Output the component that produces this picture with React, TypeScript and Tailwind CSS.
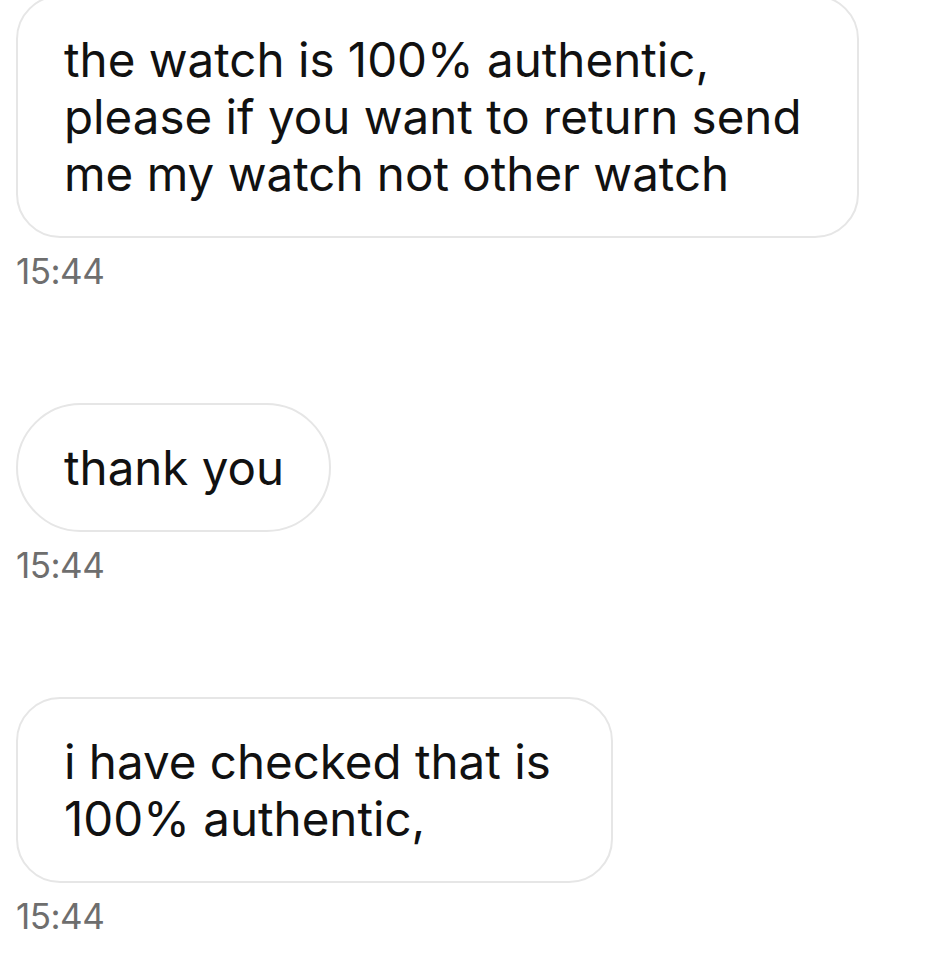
import React from "react";

type Msg = { lines: string[]; time: string; shape: string };

const messages: Msg[] = [
  {
    lines: ["the watch is 100% authentic,", "please if you want to return send", "me my watch not other watch"],
    time: "15:44",
    shape: "rounded-[44px] pr-[56px]",
  },
  { lines: ["thank you"], time: "15:44", shape: "rounded-full pr-[45px]" },
  { lines: ["i have checked that is", "100% authentic,"], time: "15:44", shape: "rounded-[44px] pr-[60px]" },
];

function Bubble({ msg }: { msg: Msg }) {
  return (
    <div className="flex flex-col items-start">
      <div
        className={
          "w-fit border-2 border-[#e6e6e6] bg-white pl-[46px] py-[34px] text-[47.5px] leading-[57px] text-[#111111] " +
          msg.shape
        }
      >
        {msg.lines.map((l, i) => (
          <div key={i} className="whitespace-nowrap">
            {l}
          </div>
        ))}
      </div>
      <div className="mt-[11px] text-[35px] leading-[44px] text-[#6e6e6e] tracking-[-0.5px]">{msg.time}</div>
    </div>
  );
}

export default function App() {
  return (
    <div className="min-h-screen bg-white pl-[16px] font-['Inter',sans-serif]">
      <div className="-mt-[5px] flex flex-col gap-[110px]">
        {messages.map((m, i) => (
          <Bubble key={i} msg={m} />
        ))}
      </div>
    </div>
  );
}
